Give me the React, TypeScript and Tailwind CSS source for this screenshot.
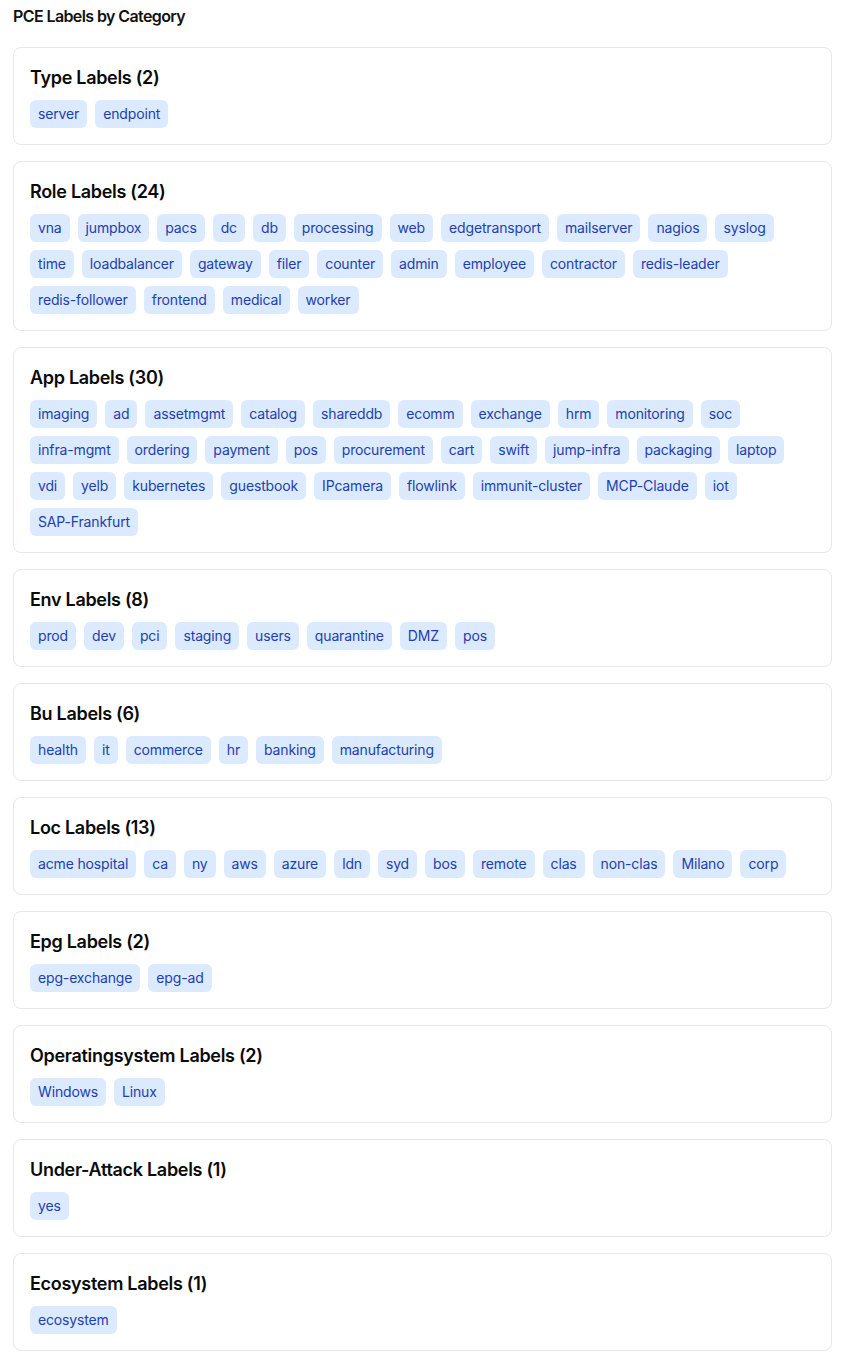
import React from "react";

const categories: { name: string; labels: string[] }[] = [
  { name: "Type", labels: ["server", "endpoint"] },
  {
    name: "Role",
    labels: [
      "vna", "jumpbox", "pacs", "dc", "db", "processing", "web", "edgetransport", "mailserver", "nagios", "syslog",
      "time", "loadbalancer", "gateway", "filer", "counter", "admin", "employee", "contractor", "redis-leader",
      "redis-follower", "frontend", "medical", "worker",
    ],
  },
  {
    name: "App",
    labels: [
      "imaging", "ad", "assetmgmt", "catalog", "shareddb", "ecomm", "exchange", "hrm", "monitoring", "soc",
      "infra-mgmt", "ordering", "payment", "pos", "procurement", "cart", "swift", "jump-infra", "packaging", "laptop",
      "vdi", "yelb", "kubernetes", "guestbook", "IPcamera", "flowlink", "immunit-cluster", "MCP-Claude", "iot",
      "SAP-Frankfurt",
    ],
  },
  { name: "Env", labels: ["prod", "dev", "pci", "staging", "users", "quarantine", "DMZ", "pos"] },
  { name: "Bu", labels: ["health", "it", "commerce", "hr", "banking", "manufacturing"] },
  {
    name: "Loc",
    labels: ["acme hospital", "ca", "ny", "aws", "azure", "ldn", "syd", "bos", "remote", "clas", "non-clas", "Milano", "corp"],
  },
  { name: "Epg", labels: ["epg-exchange", "epg-ad"] },
  { name: "Operatingsystem", labels: ["Windows", "Linux"] },
  { name: "Under-Attack", labels: ["yes"] },
  { name: "Ecosystem", labels: ["ecosystem"] },
];

export default function App() {
  return (
    <div
      className="min-h-screen bg-white pl-[13px] pr-[17px] pt-1 pb-[13px] text-[#111827]"
      style={{ fontFamily: "Inter, 'Noto Sans', sans-serif" }}
    >
      <h2 className="mb-[19px] text-base font-semibold leading-6 tracking-[-0.6px] text-[#111]">
        PCE Labels by Category
      </h2>
      <div className="flex flex-col gap-4">
        {categories.map((c) => (
          <div key={c.name} className="rounded-lg border border-[#e5e7eb] bg-white p-4">
            <h3 className="mb-2 text-lg font-semibold leading-7 tracking-[-0.3px] text-[#0a0a0a]">
              {c.name} Labels ({c.labels.length})
            </h3>
            <div className="flex flex-wrap gap-2">
              {c.labels.map((l, i) => (
                <span
                  key={l + i}
                  className="rounded-md bg-[#dbeafe] px-2 py-1 text-sm leading-5 tracking-[-0.15px] text-[#1e40af]"
                >
                  {l}
                </span>
              ))}
            </div>
          </div>
        ))}
      </div>
    </div>
  );
}
